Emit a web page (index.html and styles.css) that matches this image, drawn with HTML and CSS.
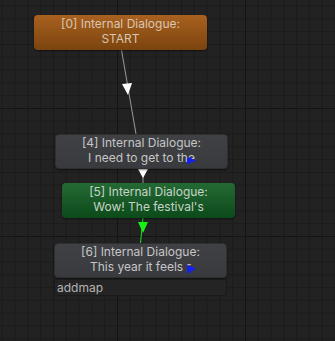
FILE: index.html
```html
<!DOCTYPE html>
<html>
<head>
  <title>Dialogue Graph</title>
  <link rel="stylesheet" href="styles.css">
</head>
<body>
  <div class="graph">
    <!-- connections between nodes -->
    <svg class="edges" width="335" height="341" viewBox="0 0 335 341">
      <line x1="121.5" y1="50" x2="136" y2="134" stroke="#9a9a9a" stroke-width="1"/>
      <polygon points="122,84 132,83 128,95" fill="#ffffff"/>
      <line x1="143" y1="169" x2="143" y2="183" stroke="#9a9a9a" stroke-width="1"/>
      <polygon points="138,169 148,169 143,178" fill="#ffffff"/>
      <line x1="143" y1="218" x2="140.5" y2="243" stroke="#22e022" stroke-width="1"/>
      <polygon points="138,222 148,222 143,233" fill="#18f018"/>
    </svg>

    <div class="node node-start" style="left:34px;top:15px">
      <div class="node-title">[0] Internal Dialogue:</div>
      <div class="node-text">START</div>
    </div>

    <div class="node node-plain" style="left:55px;top:134px">
      <div class="node-title">[4] Internal Dialogue:</div>
      <div class="node-text">I need to get to the</div>
      <svg class="port" width="10" height="8" viewBox="0 0 10 8" style="left:130px;top:22px">
        <path d="M1 1 L5 0 L6 2 L9 3 L9 5 L5 5 L4 7 L1 7 Z" fill="#1420f0"/>
      </svg>
    </div>

    <div class="node node-active" style="left:62px;top:183px">
      <div class="node-title">[5] Internal Dialogue:</div>
      <div class="node-text">Wow! The festival's</div>
    </div>

    <div class="node node-plain" style="left:54px;top:243px">
      <div class="node-title">[6] Internal Dialogue:</div>
      <div class="node-text">This year it feels r</div>
      <svg class="port" width="10" height="8" viewBox="0 0 10 8" style="left:131px;top:21px">
        <path d="M1 0 L4 1 L9 3 L9 5 L5 6 L4 8 L1 8 Z" fill="#1420f0"/>
      </svg>
    </div>

    <div class="node-footer" style="left:54px;top:279px">addmap</div>
  </div>
</body>
</html>
```

FILE: styles.css
```css
/* graph canvas */
html, body {
  margin: 0;
  padding: 0;
}

body {
  background-color: #202020;
  font-family: Inter, "Noto Sans", sans-serif;
}

.graph {
  position: relative;
  width: 335px;
  height: 341px;
  overflow: hidden;
  background-color: #222222;
  background-image:
    linear-gradient(to right, #141414 1px, transparent 1px),
    linear-gradient(to bottom, #141414 1px, transparent 1px),
    linear-gradient(to right, #1b1b1b 1px, transparent 1px),
    linear-gradient(to bottom, #1b1b1b 1px, transparent 1px);
  background-size: 128px 100%, 100% 128px, 12.8px 100%, 100% 12.8px;
  background-position: 117px 0, 0 108px, 1.8px 0, 0 5.6px;
}

.edges {
  position: absolute;
  left: 0;
  top: 0;
  z-index: 0;
}

/* nodes */
.node {
  position: absolute;
  z-index: 1;
  box-sizing: border-box;
  width: 173px;
  height: 35px;
  padding-top: 1px;
  border-radius: 4px;
  text-align: center;
  font-size: 12px;
  line-height: 15px;
  color: #c6c6c6;
  white-space: nowrap;
  overflow: hidden;
  box-shadow: 0 1px 2px rgba(0, 0, 0, 0.5);
}

.node-start {
  background: linear-gradient(to bottom, #a9611f, #7b440e);
  color: #d9c6b2;
}

.node-plain {
  background: linear-gradient(to bottom, #404145, #393a3d);
  border: 1px solid #2e2f31;
  padding-top: 0;
}

.node-active {
  background: linear-gradient(to bottom, #246a35, #0c4a1a);
  color: #c6d4c6;
}

.port {
  position: absolute;
}

.node-footer {
  position: absolute;
  z-index: 1;
  box-sizing: border-box;
  width: 173px;
  height: 17px;
  padding-left: 2px;
  background-color: #242424;
  border: 1px solid #1a1a1a;
  border-radius: 0 0 3px 3px;
  font-size: 12px;
  line-height: 15px;
  color: #b4b4b4;
}
```
